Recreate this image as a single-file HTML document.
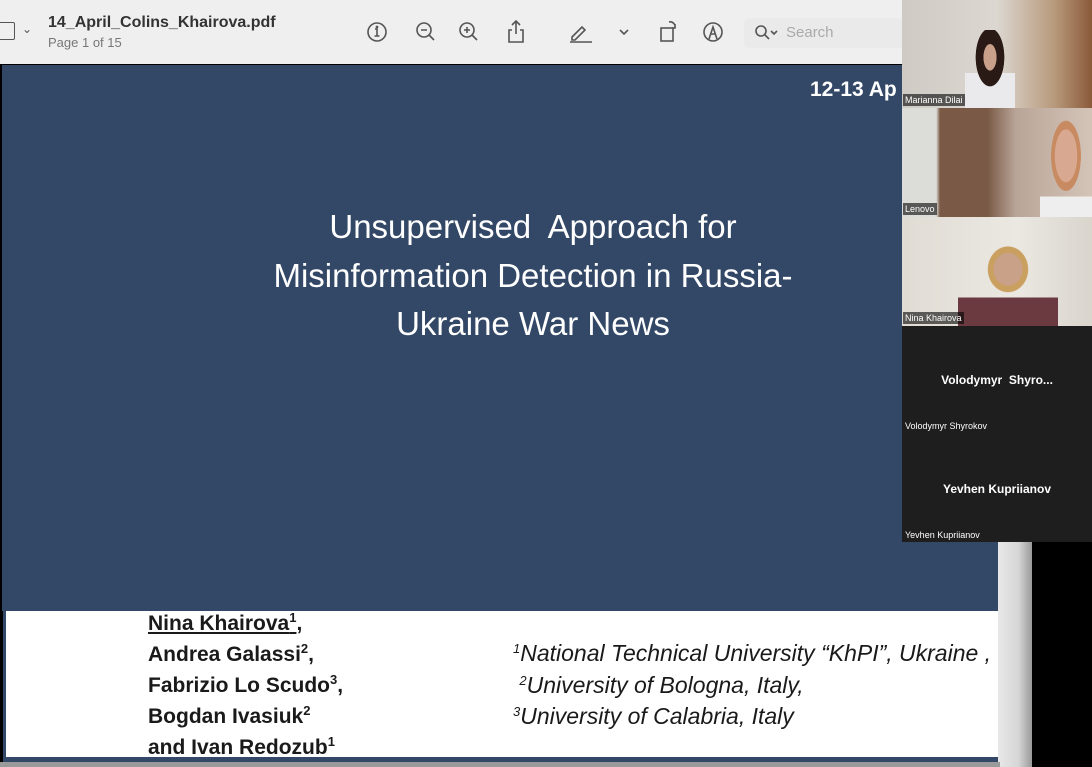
<!DOCTYPE html>
<html><head><style>
html,body{margin:0;width:1092px;height:767px;overflow:hidden}
body{background:#000;font-family:"Liberation Sans",sans-serif;position:relative}
.a{position:absolute}
.tb{left:0;top:0;width:1092px;height:64px;background:#efeff0}
.slide{left:2px;top:65px;width:996px;height:546px;background:#334867}
.white{left:3px;top:611px;width:995px;height:151px;background:#fff;border-left:3px solid #334867;border-bottom:5px solid #334867;box-sizing:border-box}
.ic{stroke:#555;fill:none;stroke-width:1.6}
.t{color:#fff;font-size:33px;text-align:center;width:700px;left:183px;top:203px;line-height:48.5px}
.nm{font-weight:bold;font-size:21px;color:#1a1a1a;line-height:31px;left:148px;top:608px;white-space:nowrap}
.af{font-style:italic;font-size:23px;color:#1a1a1a;line-height:31.5px;left:513px;top:638px;white-space:nowrap}
sup{font-size:13px;line-height:0;vertical-align:8px}
.lbl{font-size:9px;color:#fff;background:rgba(0,0,0,.6);padding:1px 2px}
</style></head><body>
<div class="a" style="left:998px;top:0;width:34px;height:767px;background:linear-gradient(90deg,#e8e8e8,#d6d6d6 60%,#9a9a9a)"></div>
<div class="a tb"></div>
<div class="a" style="left:0;top:22px;width:14px;height:16px;border:1.6px solid #555;border-left:none;border-radius:0 2px 2px 0"></div>
<div class="a" style="left:22px;top:22px;font-size:12px;color:#555">⌄</div>
<div class="a" style="left:48px;top:14px;font-size:16px;font-weight:bold;color:#333">14_April_Colins_Khairova.pdf</div>
<div class="a" style="left:48px;top:35px;font-size:13px;color:#777">Page 1 of 15</div>
<svg class="a" style="left:360px;top:18px" width="400" height="30">
<g class="ic"><circle cx="17" cy="14" r="9"/><path d="M15 11h2v7M14.5 18h5"/><circle cx="17" cy="9" r=".6" fill="#555"/>
<circle cx="64" cy="12" r="7"/><path d="M69 17l5 5M61 12h6"/>
<circle cx="107" cy="12" r="7"/><path d="M112 17l5 5M104 12h6M107 9v6"/>
<path d="M152 12h-3v12h14v-12h-3M156 16v-13M152 7l4-4 4 4"/>
<path d="M212 19l10-10 3 3-10 10h-3z M210 24h22"/>
<path d="M260 12l4 4 4-4"/>
<rect x="301" y="10" width="12" height="13"/><path d="M309 4a5 5 0 0 1 6 6M315 6v4h-3"/>
<circle cx="353" cy="14" r="9"/><path d="M349 21l4-12 4 12M351 16h4"/>
</g></svg>
<div class="a" style="left:744px;top:18px;width:160px;height:30px;background:#eaeaeb;border-radius:6px"></div>
<svg class="a" style="left:754px;top:24px" width="30" height="20"><g class="ic"><circle cx="7" cy="7" r="5"/><path d="M11 11l4 4M17 7l3 3 3-3"/></g></svg>
<div class="a" style="left:786px;top:24px;font-size:15px;color:#aaa">Search</div>
<div class="a slide"></div>
<div class="a" style="left:810px;top:78px;color:#fff;font-weight:bold;font-size:21px">12-13 Ap</div>
<div class="a t">Unsupervised&nbsp; Approach for<br>Misinformation Detection in Russia-<br>Ukraine War News</div>
<div class="a white"></div>
<div class="a nm"><u>Nina Khairova<sup>1</sup></u>,<br>Andrea Galassi<sup>2</sup>,<br>Fabrizio Lo Scudo<sup>3</sup>,<br>Bogdan Ivasiuk<sup>2</sup><br>and Ivan Redozub<sup>1</sup></div>
<div class="a af"><sup>1</sup>National Technical University “KhPI”, Ukraine ,<br>&nbsp;<sup>2</sup>University of Bologna, Italy,<br><sup>3</sup>University of Calabria, Italy</div>
<div class="a" style="left:0;top:762px;width:1000px;height:5px;background:#9a9a9a"></div>
<div class="a" style="left:902px;top:0;width:190px;height:108px;background:linear-gradient(90deg,#cfcac4,#dcd7d0 50%,#b89a7c 80%,#8a5a3a)"></div>
<div class="a" style="left:965px;top:30px;width:50px;height:78px;background:radial-gradient(ellipse at 50% 35%,#c9a08a 0 18%,#2a1a16 19% 40%,transparent 41%),linear-gradient(#0000 55%,#eaeaec 55%)"></div>
<div class="a lbl" style="left:903px;top:94px">Marianna Dilai</div>
<div class="a" style="left:902px;top:108px;width:190px;height:109px;background:linear-gradient(90deg,#dcdcd8 0 18%,#7a5a46 20% 45%,#b9a598 60%,#d4c4b8)"></div>
<div class="a" style="left:1040px;top:115px;width:52px;height:102px;background:radial-gradient(ellipse at 50% 40%,#d9a890 0 30%,#c88a60 31% 40%,transparent 41%),linear-gradient(#0000 80%,#eee 80%)"></div>
<div class="a lbl" style="left:903px;top:203px">Lenovo</div>
<div class="a" style="left:902px;top:217px;width:190px;height:109px;background:linear-gradient(90deg,#e0dcd4,#ebe8e2 60%,#d9d5cd)"></div>
<div class="a" style="left:958px;top:245px;width:100px;height:81px;background:radial-gradient(ellipse at 50% 30%,#c9a088 0 20%,#caa060 21% 28%,transparent 29%),linear-gradient(#0000 65%,#6a3a40 65%)"></div>
<div class="a lbl" style="left:903px;top:312px">Nina Khairova</div>
<div class="a" style="left:902px;top:326px;width:190px;height:216px;background:#1e1e1e"></div>
<div class="a" style="left:902px;top:373px;width:190px;text-align:center;color:#fff;font-weight:bold;font-size:12px">Volodymyr&nbsp; Shyro...</div>
<div class="a lbl" style="left:903px;top:420px;background:none">Volodymyr Shyrokov</div>
<div class="a" style="left:902px;top:482px;width:190px;text-align:center;color:#fff;font-weight:bold;font-size:12px">Yevhen Kupriianov</div>
<div class="a lbl" style="left:903px;top:529px;background:none">Yevhen Kupriianov</div>
</body></html>
